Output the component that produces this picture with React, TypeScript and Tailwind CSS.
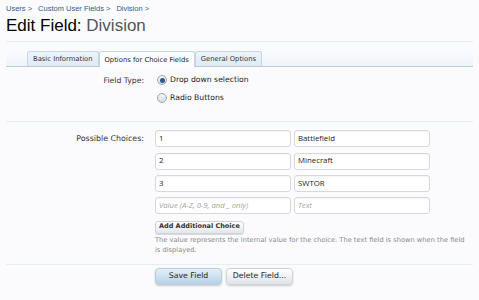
import React from "react";

const font = { fontFamily: '"DejaVu Sans", Verdana, sans-serif' };

function Input({ value, placeholder, w }: { value?: string; placeholder?: string; w: string }) {
  return (
    <div
      className={`${w} h-[17px] rounded-[3px] border border-[#d5d9de] bg-white px-[3px] flex items-center shadow-[inset_0_1px_1px_rgba(0,0,0,0.04)]`}
      style={{ fontFamily: '"Open Sans", "Noto Sans", sans-serif' }}
    >
      {value ? (
        <span className="text-[7.8px] text-[#222]">{value}</span>
      ) : (
        <span className="text-[7.7px] italic text-[#a5a5a5]">{placeholder}</span>
      )}
    </div>
  );
}

function Radio({ checked }: { checked?: boolean }) {
  return (
    <span className="relative inline-flex h-[10px] w-[10px] items-center justify-center rounded-full border border-[#9aa4ae] bg-gradient-to-b from-[#f4f4f4] to-[#d8dde2]">
      {checked && <span className="h-[5px] w-[5px] rounded-full bg-[#2c5c86]" />}
    </span>
  );
}

export default function App() {
  const choices = [
    ["1", "Battlefield"],
    ["2", "Minecraft"],
    ["3", "SWTOR"],
  ];
  return (
    <div className="h-[300px] w-[479px] overflow-hidden bg-[#fbfbfe] text-[#222]" style={font}>
      <div
        className="flex gap-[6px] px-[6px] pt-[3px] text-[7.5px] text-[#2d5b8c]"
        style={{ fontFamily: '"Liberation Sans", Arial, sans-serif' }}
      >
        <span>Users &gt;</span>
        <span>Custom User Fields &gt;</span>
        <span>Division &gt;</span>
      </div>
      <h1
        className="px-[6px] mt-[1px] text-[17px] leading-[22px] text-black"
        style={{ fontFamily: '"Liberation Sans", Arial, sans-serif' }}
      >
        Edit Field: <span className="text-[#555]">Division</span>
      </h1>
      <div className="mx-[6px] mt-[4px] h-px bg-[#e2ecf2]" />
      <div className="mx-[6px] mt-[8px] flex h-[17px] items-end border-b border-[#b8cadb] bg-gradient-to-b from-[#fbfcfe] to-[#edf4fa] pl-[21px] text-[6.8px]">
        <div className="flex h-[15px] items-center rounded-t-[3px] border border-b-0 border-[#c6d6e4] bg-gradient-to-b from-[#eef4f9] to-[#dfeaf3] px-[5px] text-[#333]">
          Basic Information
        </div>
        <div className="relative top-px flex h-[16px] items-center rounded-t-[3px] border border-b-0 border-[#c6d6e4] bg-[#fcfdfe] px-[5px] text-[#222]">
          Options for Choice Fields
        </div>
        <div className="flex h-[15px] items-center rounded-t-[3px] border border-b-0 border-[#c6d6e4] bg-gradient-to-b from-[#eef4f9] to-[#dfeaf3] px-[5px] text-[#333]">
          General Options
        </div>
      </div>

      <div className="mt-[7px] flex text-[7.7px]">
        <div className="w-[144px] pt-[1px] text-right text-[#333]">Field Type:</div>
        <div className="ml-[13px] flex flex-col gap-[6px]">
          <label className="flex items-center gap-[3px]">
            <Radio checked />
            <span>Drop down selection</span>
          </label>
          <label className="flex items-center gap-[3px]">
            <Radio />
            <span>Radio Buttons</span>
          </label>
        </div>
      </div>

      <div className="mx-[6px] mt-[18px] h-px bg-[#e2ecf2]" />

      <div className="mt-[8px] flex text-[7.9px]">
        <div className="w-[144px] pt-[3px] text-right text-[#333]">Possible Choices:</div>
        <div className="ml-[11px] flex flex-col">
          <div className="flex flex-col gap-[5.3px]">
            {choices.map(([v, t]) => (
              <div key={v} className="flex gap-[3px]">
                <Input w="w-[136px]" value={v} />
                <Input w="w-[136px]" value={t} />
              </div>
            ))}
            <div className="flex gap-[3px]">
              <Input w="w-[136px]" placeholder="Value (A-Z, 0-9, and _ only)" />
              <Input w="w-[136px]" placeholder="Text" />
            </div>
          </div>
          <div className="mt-[6px]">
            <span className="inline-flex h-[13px] items-center rounded-[3px] border border-[#cfd4da] bg-gradient-to-b from-[#ffffff] to-[#e3e6ea] px-[3px] text-[6.5px] font-bold text-[#333] shadow-[0_1px_1px_rgba(0,0,0,0.15)]">
              Add Additional Choice
            </span>
          </div>
          <p className="mt-[1px] w-[316px] text-[6.7px] leading-[10px] text-[#8a8a8a]">
            The value represents the internal value for the choice. The text field is shown when the field is displayed.
          </p>
        </div>
      </div>

      <div className="mx-[6px] mt-[9px] h-px bg-[#e2f0f4]" />

      <div className="ml-[155px] mt-[3px] flex gap-[4px] text-[7.8px]">
        <span className="flex h-[17px] w-[67px] items-center justify-center rounded-[4px] border border-[#b9ccdc] bg-gradient-to-b from-[#e6f0f8] to-[#b7d1e6] text-[#222] shadow-[0_1px_2px_rgba(0,0,0,0.2)]">
          Save Field
        </span>
        <span className="flex h-[17px] w-[67px] items-center justify-center rounded-[4px] border border-[#d0d4da] bg-gradient-to-b from-[#ffffff] to-[#e0e3e8] text-[#222] shadow-[0_1px_2px_rgba(0,0,0,0.2)]">
          Delete Field...
        </span>
      </div>
    </div>
  );
}
